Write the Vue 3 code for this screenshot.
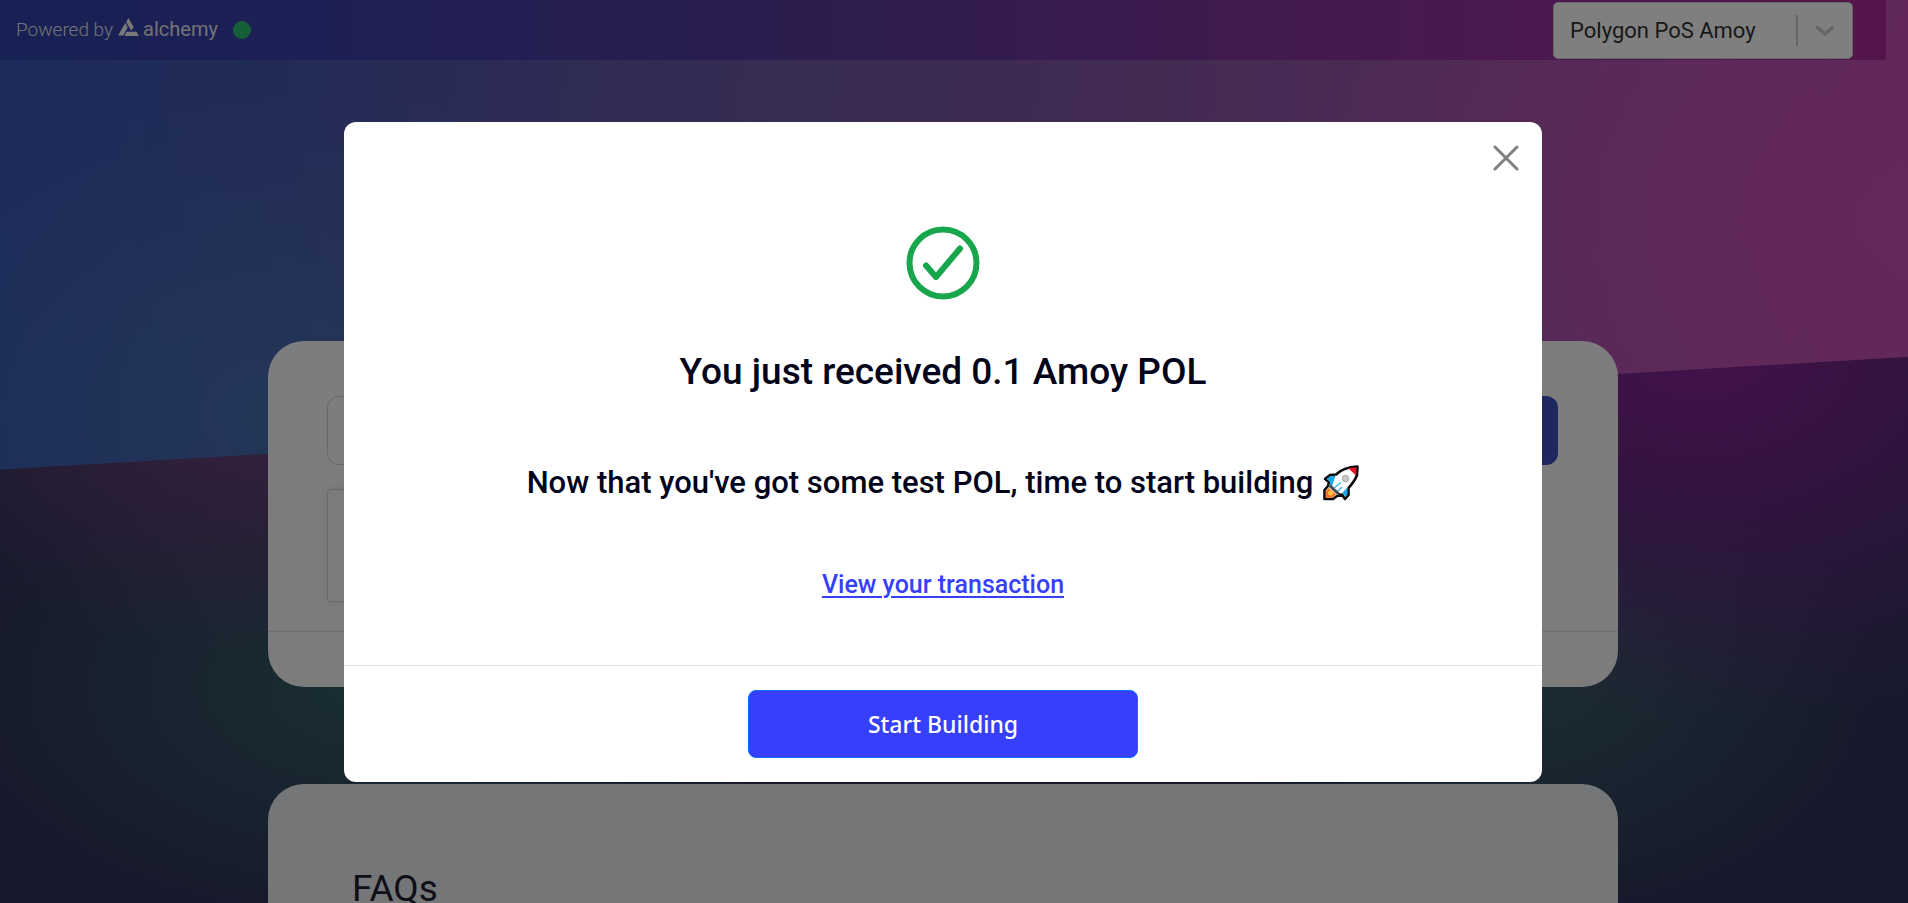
<script setup>
import { ref } from 'vue'

const network = ref('Polygon PoS Amoy')
const address = ref('')
const open = ref(true)
</script>

<template>
  <div class="page">
    <div class="backdrop-top"></div>

    <header class="topbar">
      <div class="brand">
        <span>Powered by</span>
        <svg class="brand-mark" viewBox="0 0 21 18" aria-hidden="true">
          <path d="M10.4 0 L15.6 9 L13.2 12.8 L8.2 4 Z" />
          <path d="M7.2 5 L9.7 9.3 L5.2 17.4 H0 Z" />
          <path d="M8.6 13.8 H18.4 L20.8 17.9 H6.4 Z" />
        </svg>
        <span class="brand-name">alchemy</span>
        <span class="status"></span>
      </div>
      <div class="network">
        <select v-model="network" aria-label="Network">
          <option>Polygon PoS Amoy</option>
        </select>
        <span class="network-line"></span>
        <svg class="network-arrow" viewBox="0 0 20 12" aria-hidden="true">
          <path d="M2.5 2.5 L10 9 L17.5 2.5" />
        </svg>
      </div>
    </header>

    <main class="content">
      <section class="card faucet">
        <div class="faucet-body">
          <div class="faucet-row">
            <input v-model="address" type="text" aria-label="Wallet address" />
            <button type="button" class="send" aria-label="Send"></button>
          </div>
          <div class="captcha"></div>
        </div>
        <div class="faucet-foot"></div>
      </section>
      <section class="card faq">
        <h2>FAQs</h2>
      </section>
    </main>

    <div v-if="open" class="overlay">
      <div class="modal" role="dialog" aria-modal="true" aria-labelledby="modal-title">
        <button type="button" class="close" aria-label="Close" @click="open = false">
          <svg viewBox="0 0 26 26" aria-hidden="true">
            <path d="M2 2 L24 24 M24 2 L2 24" />
          </svg>
        </button>
        <div class="modal-body">
          <svg class="check" viewBox="0 0 74 74" aria-hidden="true">
            <circle cx="37" cy="37" r="33.5" />
            <path d="M20 39.5 L30 51 L54 22.5" />
          </svg>
          <h1 id="modal-title">You just received 0.1 Amoy POL</h1>
          <p class="lead">
            <span>Now that you've got some test POL, time to start building</span>
            <svg class="rocket" viewBox="0 0 36 36" role="img" aria-label="rocket">
              <path d="M34.5 1.5 L34 10 C32 16 28 20 25.5 23 V30 L22 34 L19 29.5 L14 31 L10 34 H1.5 V25 L5 21 L6 17 L2 14 L7 10 L13 9.5 C18 4.5 24 2 34.5 1.5Z" fill="#fff" stroke="#0a0a0a" stroke-width="2.6" stroke-linejoin="round" />
              <path d="M25 3 L33.5 2.5 L33 10.5Z" fill="#e8122a" />
              <path d="M12.5 10.8 L7.5 11.2 L3.5 14 L7 17 L6.5 21 L9 21Z M24.3 22.5 V29.5 L22 31.5 L19.5 27.5Z" fill="#16a8e8" />
              <path d="M7 19 L18 29 L14 29.5 L6 22Z" fill="#464a50" />
              <path d="M5.8 23 L13 29.5 L9 32.7 H2.8 V26Z" fill="#f7721c" />
              <circle cx="7.6" cy="28" r="2.5" fill="#ffc13b" />
              <circle cx="22.5" cy="13.5" r="3.2" fill="#c9c9c9" stroke="#a5a5a5" />
              <path d="M11 23 L18 17.5 M15 26 L19 22" stroke="#35b8ec" stroke-width="1.3" />
            </svg>
          </p>
          <a class="tx" href="#transaction">View your transaction</a>
        </div>
        <div class="modal-foot">
          <button type="button" class="start">Start Building</button>
        </div>
      </div>
    </div>
  </div>
</template>

<style>
body {
  margin: 0;
  overflow: hidden;
}
</style>

<style scoped>
* {
  box-sizing: border-box;
}
.page {
  position: relative;
  height: 100vh;
  overflow: hidden;
  padding-right: 22px;
  font-family: Roboto, "Liberation Sans", sans-serif;
  color: #02041a;
  background:
    radial-gradient(ellipse 28% 42% at 89% 38%, #8a2298 0%, rgba(124, 34, 144, 0.7) 40%, transparent 100%),
    radial-gradient(ellipse 20% 26% at 13% 46%, #70427e 0%, transparent 100%),
    radial-gradient(ellipse 22% 26% at 20% 76%, #345e66 0%, transparent 100%),
    radial-gradient(ellipse 18% 26% at 80% 75%, #345c64 0%, transparent 100%),
    #2e3458;
}
.backdrop-top {
  position: absolute;
  inset: 0;
  clip-path: polygon(0 0, 100% 0, 100% 39.5%, 0 52%);
  background:
    radial-gradient(ellipse 32% 48% at 100% 24%, #c850b4 0%, transparent 100%),
    radial-gradient(ellipse 24% 36% at 15% 46%, rgba(74, 132, 176, 0.5) 0%, transparent 100%),
    linear-gradient(95deg, #3856b4 0%, #4656ae 16%, #6658a8 34%, #8256a4 55%, #ac54b0 86%, #c650b6 100%);
}
.topbar {
  position: relative;
  display: flex;
  align-items: center;
  justify-content: space-between;
  height: 60px;
  padding: 0 33px 0 16px;
  background: linear-gradient(90deg, #2e42a8 0%, #3c40a8 18%, #5c3a9c 45%, #8a34a0 72%, #ac2c9a 100%);
}
.brand {
  display: flex;
  align-items: center;
  font-size: 19px;
  line-height: 24px;
  font-weight: 300;
  color: #e4e2ea;
}
.brand-mark {
  width: 21px;
  height: 18px;
  margin: 0 4px 6px 5px;
  fill: #f4f2f4;
}
.brand-name {
  padding-bottom: 2px;
  font-size: 20px;
  font-weight: 400;
}
.status {
  width: 18px;
  height: 18px;
  margin-left: 15px;
  border-radius: 50%;
  background: #2cbc6c;
}
.network {
  position: relative;
  width: 300px;
}
.network select {
  display: block;
  width: 100%;
  height: 57px;
  padding: 2px 80px 0 16px;
  appearance: none;
  border: 1px solid #ccc;
  border-radius: 5px;
  background: #fff;
  color: #333;
  font: 400 22px/28px Roboto, "Liberation Sans", sans-serif;
}
.network-line {
  position: absolute;
  top: 13px;
  right: 55px;
  width: 2px;
  height: 31px;
  background: #ccc;
}
.network-arrow {
  position: absolute;
  top: 23px;
  right: 18px;
  width: 20px;
  height: 12px;
  fill: none;
  stroke: #ccc;
  stroke-width: 3.5;
  stroke-linecap: round;
}
.content {
  position: relative;
  display: flex;
  flex-direction: column;
  gap: 97px;
  max-width: 1350px;
  margin: 281px auto 0;
}
.card {
  border-radius: 36px;
  background: rgba(255, 255, 255, 0.97);
}
.faucet-body {
  padding: 55px 60px 29px 59px;
  border-bottom: 1px solid #dcdcdc;
}
.faucet-row {
  display: flex;
  gap: 24px;
}
.faucet-row input {
  flex: 1;
  height: 69px;
  padding: 0 20px;
  border: 1px solid #d0d0d0;
  border-radius: 12px;
  background: transparent;
  font-size: 20px;
}
.send {
  width: 200px;
  border: 0;
  border-radius: 12px;
  background: #3e4ebe;
}
.captcha {
  width: 456px;
  height: 113px;
  margin-top: 24px;
  border: 1px solid #d0d0d0;
  border-radius: 4px;
  box-shadow: 0 0 6px rgba(0, 0, 0, 0.1);
}
.faucet-foot {
  height: 55px;
}
.faq {
  min-height: 240px;
  padding: 80px 84px;
  background: rgba(238, 240, 244, 0.98);
}
.faq h2 {
  margin: 0;
  font-size: 37px;
  line-height: 50px;
  font-weight: 400;
  color: #1c1e30;
}
.overlay {
  position: fixed;
  inset: 0;
  display: flex;
  align-items: center;
  justify-content: center;
  padding-right: 22px;
  background: rgba(0, 0, 0, 0.5);
}
.modal {
  position: relative;
  width: 90%;
  max-width: 1198px;
  border-radius: 12px;
  background: #fff;
}
.close {
  position: absolute;
  top: 23px;
  right: 23px;
  width: 26px;
  height: 26px;
  padding: 0;
  border: 0;
  background: none;
}
.close svg {
  display: block;
  fill: none;
  stroke: #7f7f7f;
  stroke-width: 3;
  stroke-linecap: round;
}
.modal-body {
  display: flex;
  flex-direction: column;
  align-items: center;
  padding: 104px 24px 64px;
  border-bottom: 1px solid #dee2e6;
}
.check {
  width: 74px;
  height: 74px;
  fill: none;
  stroke: #18a64c;
  stroke-width: 6;
  stroke-linecap: round;
  stroke-linejoin: round;
}
h1 {
  margin: 48px 0 0;
  font-size: 37px;
  line-height: 48px;
  font-weight: 500;
}
.lead {
  display: flex;
  align-items: center;
  gap: 10px;
  margin: 67px 0 0;
  font-size: 31px;
  line-height: 40px;
  font-weight: 500;
}
.rocket {
  width: 36px;
  height: 36px;
}
.tx {
  margin-top: 66px;
  font-size: 25px;
  line-height: 32px;
  font-weight: 500;
  color: #363ff9;
  text-underline-offset: 3px;
  text-decoration-thickness: 2px;
}
.modal-foot {
  display: flex;
  justify-content: center;
  padding: 24px;
}
.start {
  width: 390px;
  height: 68px;
  border: 1px solid #0d6efd;
  border-radius: 8px;
  background: #363ff9;
  color: #fff;
  font: 500 23px/32px "Noto Sans", "Open Sans", sans-serif;
}
</style>
